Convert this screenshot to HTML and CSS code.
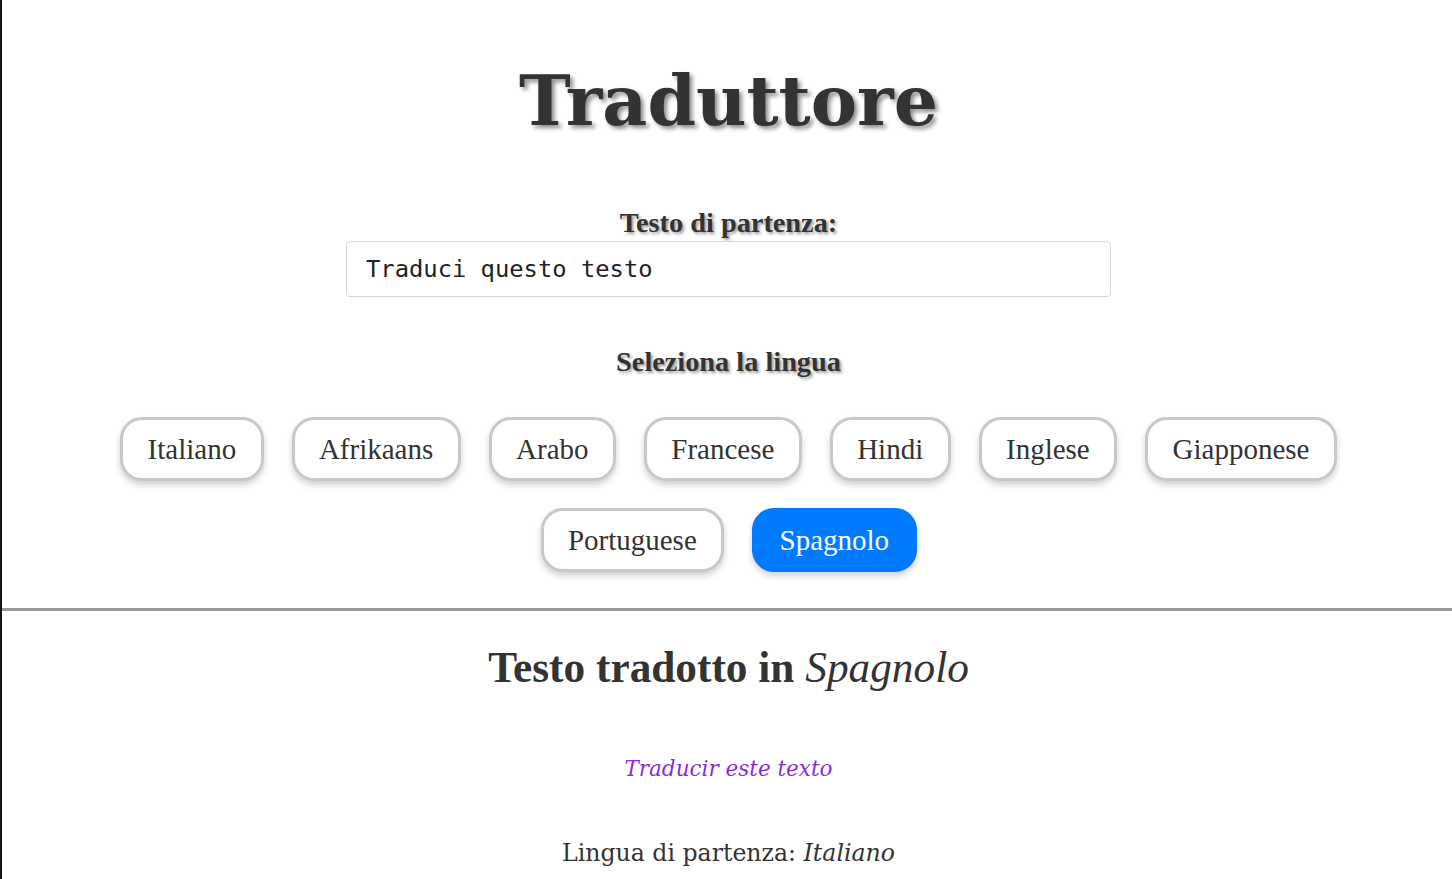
FILE: index.html
```html
<!DOCTYPE html>
<html lang="it">
<head>
<meta charset="utf-8">
<title>Traduttore</title>
<link rel="stylesheet" href="styles.css">
</head>
<body>
<div class="frame">
  <header class="top">
    <h1 class="title">Traduttore</h1>
    <label class="label" for="src">Testo di partenza:</label>
    <input id="src" class="src-input" type="text" value="Traduci questo testo">
    <h2 class="label label-lang">Seleziona la lingua</h2>
    <div class="langs">
      <div class="row">
        <button class="lang">Italiano</button>
        <button class="lang">Afrikaans</button>
        <button class="lang">Arabo</button>
        <button class="lang">Francese</button>
        <button class="lang">Hindi</button>
        <button class="lang">Inglese</button>
        <button class="lang">Giapponese</button>
      </div>
      <div class="row">
        <button class="lang">Portuguese</button>
        <button class="lang active">Spagnolo</button>
      </div>
    </div>
  </header>
  <hr class="divider">
  <section class="result">
    <h2 class="result-title">Testo tradotto in <em>Spagnolo</em></h2>
    <p class="translated">Traducir este texto</p>
    <p class="source-lang">Lingua di partenza: <em>Italiano</em></p>
  </section>
</div>
</body>
</html>
```
FILE: styles.css
```css
html, body {
  margin: 0;
  padding: 0;
  background: #fff;
}
body {
  color: #333;
  font-family: "DejaVu Serif", serif;
}
.frame {
  border-left: 2px solid #111;
  min-height: 879px;
  box-sizing: border-box;
  padding-left: 3px;
}
.top {
  display: flex;
  flex-direction: column;
  align-items: center;
  padding-top: 53px;
}
.title {
  margin: 0;
  font-family: "DejaVu Serif", serif;
  font-weight: bold;
  font-size: 69.5px;
  line-height: 96px;
  color: #333;
  text-shadow: 3px 3px 4px rgba(0,0,0,0.45);
}
.label {
  display: block;
  margin: 57px 0 0;
  font-family: "Liberation Serif", serif;
  font-weight: bold;
  font-size: 28.3px;
  line-height: 34px;
  color: #333;
  text-shadow: 2px 2px 3px rgba(0,0,0,0.4);
}
.src-input {
  box-sizing: border-box;
  width: 765px;
  height: 56px;
  margin-top: 1px;
  padding: 0 19px;
  border: 1px solid #d6d6d6;
  border-radius: 4px;
  font-family: "DejaVu Sans Mono", monospace;
  font-size: 23.8px;
  color: #222;
  background: #fff;
  outline: none;
}
.label-lang {
  margin-top: 48px;
}
.langs {
  display: flex;
  flex-direction: column;
  align-items: center;
  gap: 27px;
  margin-top: 38px;
}
.row {
  display: flex;
  gap: 28px;
  justify-content: center;
}
.lang {
  box-sizing: border-box;
  height: 64px;
  padding: 0 24.4px;
  border: 3px solid #c8c8c8;
  border-radius: 22px;
  background: #fff;
  color: #333;
  font-family: "Liberation Serif", serif;
  font-size: 29px;
  box-shadow: 0 4px 6px rgba(0,0,0,0.18);
  cursor: pointer;
}
.lang.active {
  background: #007bff;
  border-color: #007bff;
  color: #fff;
}
.divider {
  margin: 36px 0 0 -3px;
  border: 0;
  border-top: 3px solid #999;
  height: 0;
}
.result {
  display: flex;
  flex-direction: column;
  align-items: center;
}
.result-title {
  margin: 31px 0 0;
  font-family: "Liberation Serif", serif;
  font-weight: bold;
  font-size: 43.3px;
  line-height: 50px;
  color: #333;
}
.result-title em {
  font-weight: normal;
}
.translated {
  margin: 62px 0 0;
  font-family: "DejaVu Serif", serif;
  font-style: italic;
  font-size: 21.5px;
  line-height: 30px;
  color: #8a2be2;
}
.source-lang {
  margin: 54px 0 0;
  font-family: "DejaVu Serif", serif;
  font-size: 23.6px;
  line-height: 30px;
  color: #333;
}
```
